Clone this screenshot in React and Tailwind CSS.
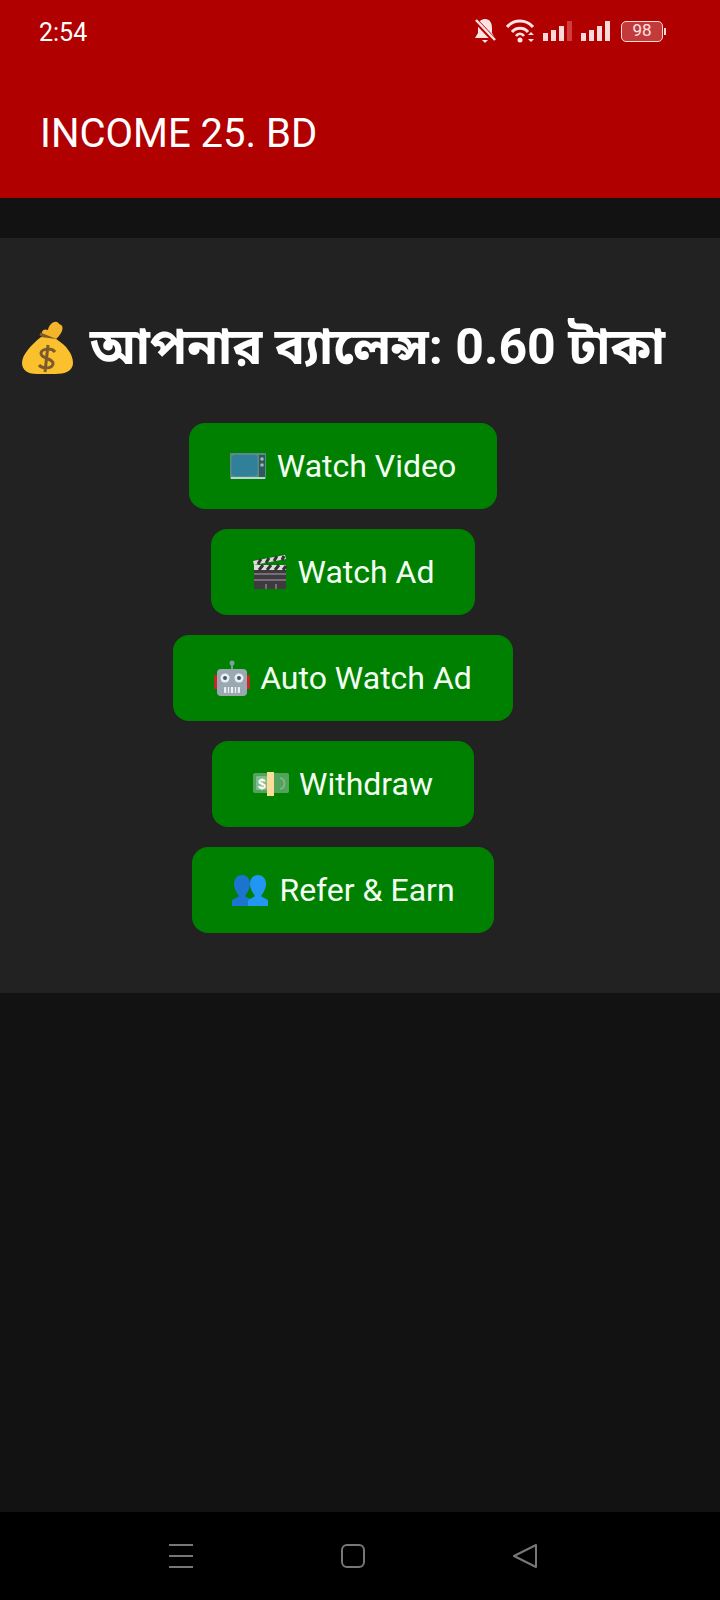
import React from "react";

const MoneyBag = () => (
  <svg width="54" height="56" viewBox="0 0 54 56">
    <path d="M21 18 C20 12 22 9 27 11 C28 4 36 0 38 5 C44 6 42 14 35 20 Z" fill="#f5b52a" />
    <path d="M19 15 L36 22" stroke="#7d5a2a" strokeWidth="3" />
    <path d="M20 18 C9 27 1 36 1 44 C1 52 8 55 16 55 H34 C44 55 52 52 52 44 C52 35 45 26 35 20 Z" fill="#fbc02d" />
    <path d="M34 33 C31 29 21 29 20 34 C19 40 33 39 32 45 C31 50 21 50 18 46 M27 26 L24 53" stroke="#7d5a2a" strokeWidth="3" fill="none" />
  </svg>
);

const Tv = () => (
  <svg width="37" height="27" viewBox="0 0 37 27">
    <rect x="0" y="0" width="36" height="26" rx="1" fill="#5b8a86" />
    <rect x="1.5" y="2" width="26" height="21" rx="4" fill="#2f8098" />
    <rect x="29" y="2" width="6" height="22" fill="#2f5a5c" />
    <circle cx="32" cy="6" r="1.8" fill="#9fb8b8" />
    <circle cx="32" cy="12" r="1.8" fill="#9fb8b8" />
    <rect x="1" y="24" width="34" height="2" fill="#b5d8d0" />
  </svg>
);

const Clapper = () => (
  <svg width="36" height="36" viewBox="0 0 36 36">
    <rect x="2" y="14" width="32" height="21" fill="#3f3a40" />
    <path d="M2 20 H34 M2 26 H34 M14 30 V35 M24 30 V35" stroke="#a8a4a8" strokeWidth="1" />
    <rect x="2" y="11" width="32" height="5" fill="#ddd" />
    <path d="M7 16 L11 11 M15 16 L19 11 M23 16 L27 11 M31 16 L34 12" stroke="#333" strokeWidth="3" />
    <path d="M1 7 L33 1 L34 5 L2 11 Z" fill="#ddd" />
    <path d="M6 10 L9 5 M14 9 L17 4 M22 7 L25 2 M30 6 L32 2" stroke="#333" strokeWidth="3" />
  </svg>
);

const Robot = () => (
  <svg width="36" height="36" viewBox="0 0 36 36">
    <path d="M18 2 V10" stroke="#78a09c" strokeWidth="2" />
    <circle cx="18" cy="3" r="2.5" fill="#78a09c" />
    <rect x="0" y="15" width="5" height="14" rx="1" fill="#c62828" />
    <rect x="31" y="15" width="5" height="14" rx="1" fill="#c62828" />
    <rect x="3" y="9" width="30" height="27" rx="4" fill="#9aa8b2" />
    <circle cx="11" cy="18" r="4.5" fill="#eceff1" />
    <circle cx="25" cy="18" r="4.5" fill="#eceff1" />
    <circle cx="11" cy="18" r="2" fill="#455a64" />
    <circle cx="25" cy="18" r="2" fill="#455a64" />
    <rect x="10" y="27" width="16" height="6" rx="1" fill="#eceff1" />
    <path d="M13 27 V33 M16 27 V33 M20 27 V33 M23 27 V33" stroke="#607d8b" strokeWidth="1" />
  </svg>
);

const Money = () => (
  <svg width="36" height="24" viewBox="0 0 36 24">
    <rect x="0" y="1" width="36" height="20" rx="2" fill="#52a35c" />
    <rect x="3" y="4" width="11" height="14" rx="1" fill="#82bb88" />
    <text x="9" y="17" textAnchor="middle" fontSize="14" fontWeight="700" fill="#fff" fontFamily="Liberation Sans">$</text>
    <path d="M27 6 C33 7 33 16 27 17" stroke="#82bb88" strokeWidth="1.5" fill="none" />
    <rect x="14" y="0" width="7" height="24" fill="#fcdc9a" />
  </svg>
);

const People = () => (
  <svg width="38" height="32" viewBox="0 0 38 32">
    <path d="M1 32 V27 C1 25 6 24 8 22 C5 18 3 14 3 10 C3 4 7 1 11 1 C15 1 19 4 19 10 C19 14 17 18 14 22 C16 24 21 25 21 27 V32 Z" fill="#1b74d0" />
    <path d="M17 32 V27 C17 25 22 24 24 22 C21 18 19 14 19 10 C19 4 23 1 27 1 C31 1 35 4 35 10 C35 14 33 18 30 22 C32 24 37 25 37 27 V32 Z" fill="#2196f3" />
  </svg>
);

const SignalBars = ({ dimLast }) => (
  <svg width="29" height="20" viewBox="0 0 29 20">
    <rect x="0" y="12" width="5" height="8" fill="#ffd9d9" />
    <rect x="8" y="9" width="5" height="11" fill="#ffd9d9" />
    <rect x="16" y="5" width="5" height="15" fill="#ffd9d9" />
    <rect x="24" y="0" width="5" height="20" fill={dimLast ? "#d23c3c" : "#ffd9d9"} />
  </svg>
);

const StatusBar = () => (
  <div className="flex h-[66px] items-center pl-[39px] pr-[54px]">
    <span className="text-[25px] text-white">2:54</span>
    <div className="ml-auto flex -translate-y-[2px] items-center">
      <svg width="24" height="26" viewBox="0 0 24 26" className="mr-[9px]">
        <path d="M12 1 C7 1 5 5 5 10 V15 L2 20 H22 L19 15 V10 C19 5 17 1 12 1 Z" fill="#ffe3e3" />
        <path d="M9 22 H15 L12 25 Z" fill="#ffe3e3" />
        <path d="M3 3 L22 23" stroke="#b80000" strokeWidth="5" />
        <path d="M3 2 L22 22" stroke="#ffe3e3" strokeWidth="2.5" />
      </svg>
      <svg width="30" height="24" viewBox="0 0 30 24" fill="none" className="mr-[7px]">
        <path d="M1 8 C8 0 20 0 27 8" stroke="#ffe3e3" strokeWidth="3" />
        <path d="M6 13 C10 8 18 8 22 13" stroke="#ffe3e3" strokeWidth="3" />
        <path d="M10 17 C12 14 16 14 18 17" stroke="#ffe3e3" strokeWidth="2.5" />
        <circle cx="14" cy="21" r="2.5" fill="#ffe3e3" />
        <path d="M22 16 L25 13 L28 16 Z M22 20 L25 23 L28 20 Z" fill="#ffe3e3" />
      </svg>
      <div className="mr-[9px]"><SignalBars dimLast /></div>
      <div className="mr-[11px]"><SignalBars /></div>
      <div className="flex h-[21px] w-[42px] items-center justify-center rounded-[5px] border-[1.5px] border-[#ffd9d9] bg-[#c23a3a] text-[17px] text-[#ffe3e3]">98</div>
      <div className="ml-[1px] h-[7px] w-[2px] bg-[#ffd9d9]" />
    </div>
  </div>
);

const buttons = [
  { label: "Watch Video", icon: <Tv />, width: "w-[308px]" },
  { label: "Watch Ad", icon: <Clapper />, width: "w-[264px]" },
  { label: "Auto Watch Ad", icon: <Robot />, width: "w-[340px]" },
  { label: "Withdraw", icon: <Money />, width: "w-[262px]" },
  { label: "Refer & Earn", icon: <People />, width: "w-[302px]" },
];

export default function App() {
  return (
    <div className="flex h-[1600px] flex-col bg-[#121212] font-['Roboto',sans-serif]">
      <header className="h-[198px] bg-[#b00000]">
        <StatusBar />
        <h1 className="pl-[40px] pt-[43px] text-[40px] leading-[50px] text-white">INCOME 25. BD</h1>
      </header>

      <main className="mt-[40px] flex h-[755px] flex-col items-center bg-[#222222] pr-[34px]">
        <div className="mt-[78px] flex h-[62px] items-center">
          <MoneyBag />
          <h2 className="ml-[15px] whitespace-nowrap font-['Roboto','Noto_Sans','Noto_Sans_Bengali',sans-serif] text-[50px] font-bold text-white">আপনার ব্যালেন্স: 0.60 টাকা</h2>
        </div>
        <div className="mt-[45px] flex flex-col items-center gap-[20px]">
          {buttons.map((b) => (
            <button key={b.label} className={`flex h-[86px] items-center justify-center rounded-[16px] bg-[#008000] text-[32px] text-[#f2fff2] ${b.width}`}>
              <span className="mr-[10px] flex items-center">{b.icon}</span>
              {b.label}
            </button>
          ))}
        </div>
      </main>

      <div className="flex-1" />

      <nav className="flex h-[88px] items-center bg-black pl-[168px] pr-[183px]">
        <svg width="26" height="26" viewBox="0 0 26 26" stroke="#777" strokeWidth="2">
          <path d="M1 2 H25 M1 13 H25 M1 24 H25" />
        </svg>
        <div className="ml-[147px] h-[24px] w-[24px] rounded-[6px] border-2 border-[#777]" />
        <svg width="24" height="26" viewBox="0 0 24 26" fill="none" stroke="#777" strokeWidth="2" strokeLinejoin="round" className="ml-auto">
          <path d="M1 13 L23 2 V24 Z" />
        </svg>
      </nav>
    </div>
  );
}
